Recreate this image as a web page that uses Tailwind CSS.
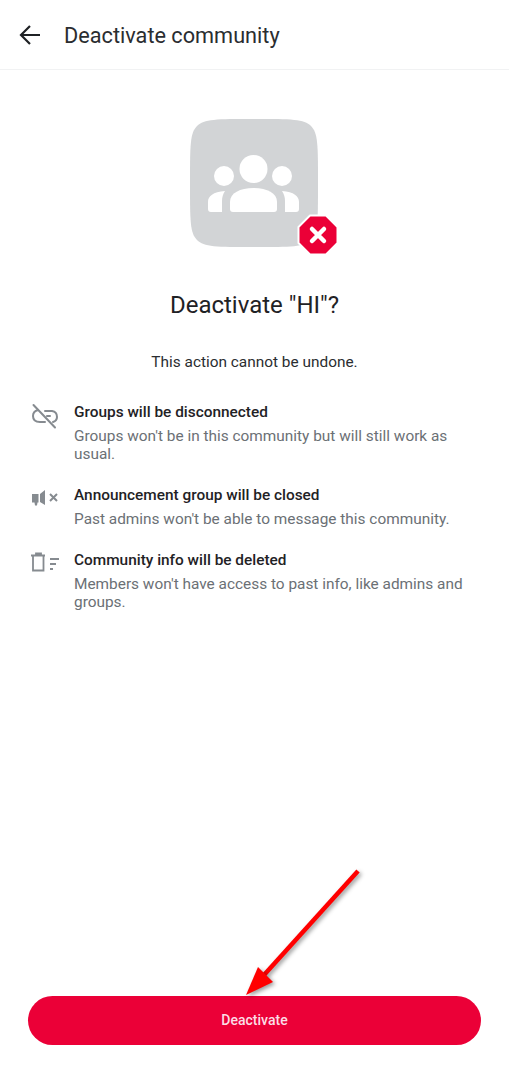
<!DOCTYPE html>
<html lang="en">
<head>
    <meta charset="UTF-8">
    <meta name="viewport" content="width=device-width, initial-scale=1.0">
    <title>Deactivate community</title>
    <script src="https://cdn.jsdelivr.net/npm/@tailwindcss/browser@4"></script>
</head>
<body class="bg-white font-['Roboto',sans-serif] text-[#1f2225]">
    <div class="relative w-[509px] h-[1080px] flex flex-col overflow-hidden">
        <!-- Header -->
        <header class="h-[70px] shrink-0 flex items-center border-b border-[#f1f2f3] pl-[19px]">
            <svg class="w-[22px] h-[22px]" viewBox="0 0 22 22" fill="none" stroke="#1f2225" stroke-width="2.2">
                <path d="M21 11H2M11 2l-9 9 9 9"/>
            </svg>
            <h1 class="ml-[23px] mt-[2px] text-[21.7px] leading-[28px] text-[#2a2d30]">Deactivate community</h1>
        </header>

        <!-- Community icon -->
        <div class="relative w-[128px] h-[128px] mt-[49px] ml-[190px] shrink-0">
            <svg class="w-[128px] h-[128px]" viewBox="0 0 128 128">
                <path fill="#d2d4d6" d="M64 0c38 0 50 0 57 7s7 19 7 57 0 50-7 57-19 7-57 7-50 0-57-7-7-19-7-57 0-50 7-57S26 0 64 0z"/>
                <g fill="#fff">
                    <circle cx="63.500" cy="50" r="14"/>
                    <circle cx="34" cy="57" r="10"/>
                    <circle cx="92" cy="57" r="10"/>
                    <path d="M40 83c0-9 10-14 23.500-14S87 74 87 83v7c0 2-1 3-3 3H43c-2 0-3-1-3-3z"/>
                    <path d="M21 93c-2 0-3-1-3-3v-7c0-6 5-10 17-11-2 3-3 6-3 10v11z"/>
                    <path d="M106 93c2 0 3-1 3-3v-7c0-6-5-10-17-11 2 3 3 6 3 10v11z"/>
                </g>
            </svg>
            <svg class="absolute left-[107px] top-[95px] w-[42px] h-[42px]" viewBox="0 0 42 42">
                <path fill="#eb0037" stroke="#fff" stroke-width="2" stroke-linejoin="round" d="M13 1.500h16L40.500 13v16L29 40.500H13L1.500 29V13z"/>
                <path stroke="#fff" stroke-width="4.500" stroke-linecap="round" d="M15 15l12 12M27 15L15 27"/>
            </svg>
        </div>

        <h2 class="mt-[42px] text-center text-[24px] leading-[32px] text-[#1f2225]">Deactivate "HI"?</h2>
        <p class="mt-[30px] text-center text-[15.4px] leading-[22px] text-[#2a2d30]">This action cannot be undone.</p>

        <!-- Consequences -->
        <ul class="mt-[29px] pl-[31px] pr-[40px] flex flex-col gap-[22px] text-[15.4px]">
            <li class="flex items-start">
                <svg class="w-[28px] h-[28px] mt-[-1px] shrink-0" viewBox="0 0 28 28" fill="none" stroke="#868b90" stroke-width="2" stroke-linecap="round">
                    <path d="M7 9C3.500 10 2 12 2 15c0 4 3 6 7 6h5M14 10h7c3 .5 5 3 5 6 0 2-1 4-4 5"/>
                    <path d="M16 15h3M2.500 4L24 26.500"/>
                </svg>
                <div class="ml-[15px]">
                    <p class="font-medium leading-[20px] text-[#1f2225]">Groups will be disconnected</p>
                    <p class="mt-[5px] leading-[18px] text-[#6b7075]">Groups won't be in this community but will still work as usual.</p>
                </div>
            </li>
            <li class="flex items-start">
                <svg class="w-[28px] h-[20px] mt-[2px] shrink-0" viewBox="0 0 28 20" fill="none">
                    <path fill="#868b90" d="M1 7h6.500v8.500H6.500L6 18.500H4L3.500 15.500H1zM9 7l5-4v15l-5-3z"/>
                    <path stroke="#868b90" stroke-width="2" d="M19 7l7 7M26 7l-7 7"/>
                </svg>
                <div class="ml-[15px]">
                    <p class="font-medium leading-[20px] text-[#1f2225]">Announcement group will be closed</p>
                    <p class="mt-[5px] leading-[18px] text-[#6b7075]">Past admins won't be able to message this community.</p>
                </div>
            </li>
            <li class="flex items-start">
                <svg class="w-[28px] h-[20px] mt-[2px] shrink-0" viewBox="0 0 28 20" fill="none" stroke="#868b90" stroke-width="1.800">
                    <path d="M0 3.500h14M5 3.500V1.500h5v2M2 3.500v15h10.500v-15M19 7h9M19 12h6M19 17h3"/>
                </svg>
                <div class="ml-[15px]">
                    <p class="font-medium leading-[20px] text-[#1f2225]">Community info will be deleted</p>
                    <p class="mt-[5px] leading-[18px] text-[#6b7075]">Members won't have access to past info, like admins and groups.</p>
                </div>
            </li>
        </ul>

        <!-- Action -->
        <div class="mt-auto px-[28px] pb-[35px]">
            <button class="w-[453px] h-[49px] rounded-full bg-[#eb0037] text-[#fbdde5] text-[14px] font-medium">Deactivate</button>
        </div>

        <!-- Annotation arrow -->
        <svg class="absolute left-0 top-0 pointer-events-none" width="509" height="1080" viewBox="0 0 509 1080">
            <path d="M358 871L264 975" stroke="#ff0000" stroke-width="4.500" fill="none" class="drop-shadow-[2px_2px_2px_rgba(0,0,0,0.4)]"/>
            <path d="M246 995L258 967L273 982z" fill="#ff0000" class="drop-shadow-[2px_2px_2px_rgba(0,0,0,0.4)]"/>
        </svg>
    </div>
</body>
</html>
